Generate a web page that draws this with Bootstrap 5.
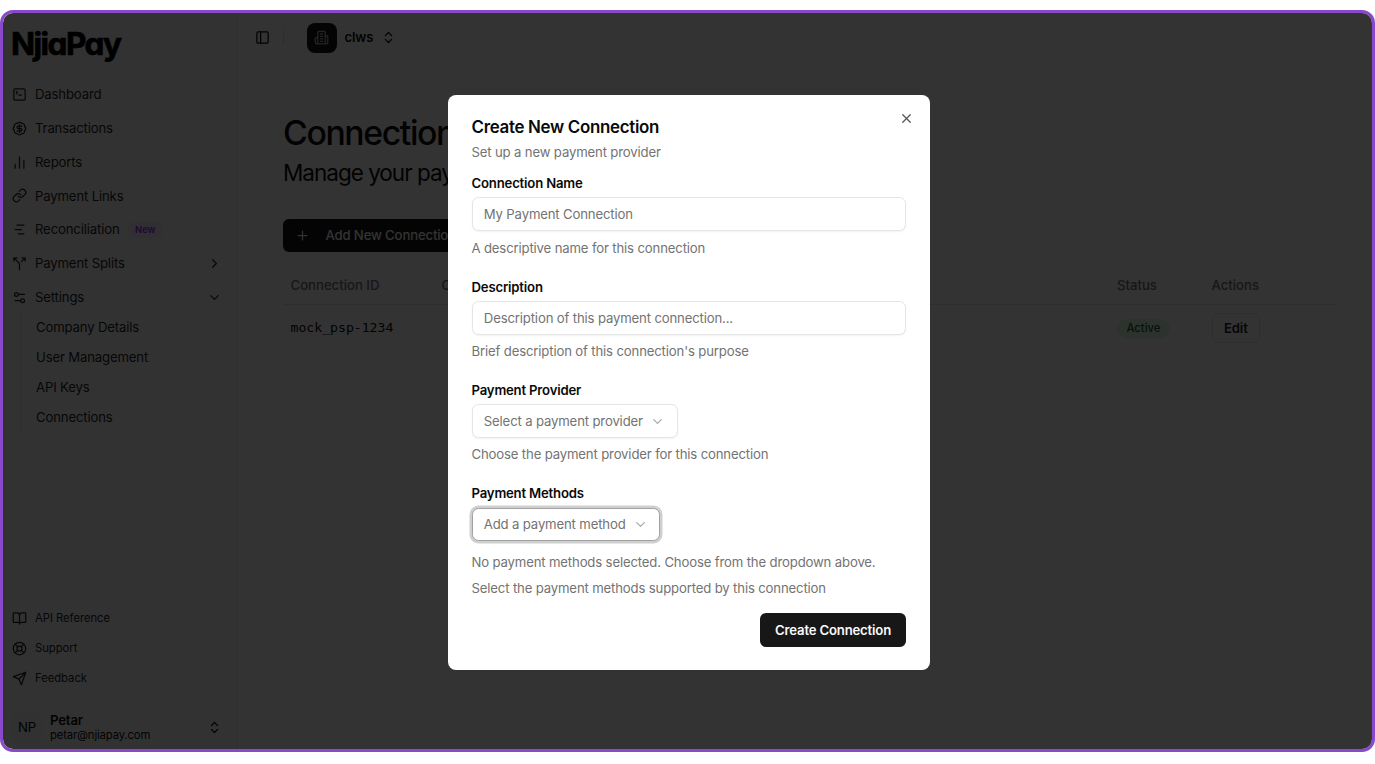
<!DOCTYPE html>
<html lang="en">
<head>
  <meta charset="UTF-8">
  <title>NjiaPay - Connections</title>
  <link href="https://cdn.jsdelivr.net/npm/bootstrap@5.3.3/dist/css/bootstrap.min.css" rel="stylesheet">
  <style>
    body { font-family: "Inter", sans-serif; font-size: 13.15px; line-height: 18.8px; letter-spacing: -.15px; color: #0a0a0a; padding-top: 10px; overflow: hidden; background: #fff; }
    button, input { letter-spacing: -.15px; }
    svg { fill: none; stroke: currentColor; stroke-width: 2; stroke-linecap: round; stroke-linejoin: round; flex-shrink: 0; width: 15px; height: 15px; }
    .app-frame { height: 741.5px; border: 3px solid #8a49cb; border-radius: 13px; background: #fff; overflow: hidden; }

    .sidebar { width: 235px; flex-shrink: 0; background: #fafafa; border-right: 1px solid #e5e5e5; padding: 0 8px 0 9px; }
    .brand { font-size: 31.5px; font-weight: 700; line-height: 38px; height: 64.5px; padding-top: 12px; letter-spacing: -1.5px; font-feature-settings: "cv11"; color: #000; margin-left: -1px; -webkit-text-stroke: .7px #000; }
    .side-link { height: 33.85px; gap: 8px; }
    .side-link .chev { margin-right: 7px; }
    .sub-menu { border-left: 1px solid #e5e5e5; margin-left: 7.5px; padding-left: 15.5px; margin-top: -2px; }
    .sub-menu a { height: 30.1px; }
    .sidebar a, .sidebar a:hover { color: #262626; text-decoration: none; }
    .tag-new { font-size: 9.4px; font-weight: 600; line-height: 16px; background: #f3e8ff; color: #9333ea; padding: 0 7.5px; letter-spacing: 0; }
    .side-foot { font-size: 11.3px; letter-spacing: -.05px; margin-bottom: 13px; }
    .side-foot a { height: 30.1px; gap: 8px; }
    .user-box { height: 42px; }
    .initials { width: 30px; height: 30px; background: #f5f5f5; border-radius: 7px; }
    .user-name { line-height: 15px; font-weight: 600; }
    .user-mail { font-size: 11.3px; line-height: 14px; }

    .topbar { height: 49px; padding-left: 17px; }
    .topbar .vr { margin-left: 13px; height: 15px; opacity: .12; }
    .org-icon { width: 30px; height: 30px; margin-left: 22.5px; background: #171717; color: #fafafa; border-radius: 8px; }
    .org-icon svg { opacity: .7; }
    .page-body { padding: 51.5px 36px 0 45px; }
    .page-title { font-size: 33.8px; font-weight: 500; line-height: 38px; letter-spacing: -1.4px; margin-bottom: 6.5px; }
    .page-sub { font-size: 22.5px; line-height: 30px; letter-spacing: -1px; margin-bottom: 30.5px; }
    .btn-dark-solid { background: #171717; color: #fafafa; height: 33.8px; border-radius: 6px; font-size: 13.15px; font-weight: 500; padding: 0 15px; line-height: 1; }
    .btn-add { padding-left: 10.5px; }
    .btn-create { font-weight: 600; letter-spacing: -.18px; padding: 0 14px; }
    .conn-table { table-layout: fixed; margin-top: 15px; }
    .conn-table th { font-weight: 500; color: #737373; padding: 0 7.5px; height: 37.6px; vertical-align: middle; border-color: #e5e5e5; letter-spacing: 0; }
    .conn-table td { padding: 0 7.5px; height: 46px; vertical-align: middle; border: 0; color: #0a0a0a; }
    .conn-table td.mono { font-family: "DejaVu Sans Mono", monospace; font-size: 13.15px; letter-spacing: 0; }
    .tag-active { font-size: 11.3px; font-weight: 500; letter-spacing: 0; line-height: 19px; background: #dcfce7; color: #166534; padding: 0 9.4px; }
    .btn-edit { border: 1px solid #e5e5e5; height: 30px; border-radius: 6px; font-size: 13.15px; font-weight: 600; padding: 0 11.5px; line-height: 1; }

    .backdrop-dim { background: rgba(0, 0, 0, .8); z-index: 5; }
    .dialog-box { left: 445px; top: 82px; width: 482px; height: 575px; background: #fff; border-radius: 8px; padding: 22.5px 24px 0 23.5px; z-index: 6; }
    .dialog-close { right: 16px; top: 16px; color: #555; line-height: 0; }
    .dialog-title { font-size: 16.9px; font-weight: 600; line-height: 19px; letter-spacing: -.3px; margin-bottom: 6px; }
    .hint { color: #737373; }
    .form-stack { gap: 21.2px; margin-top: 14px; }
    .field { display: flex; flex-direction: column; align-items: flex-start; gap: 7.5px; }
    .field label { font-weight: 600; line-height: 16.1px; letter-spacing: -.18px; margin-bottom: -1.5px; }
    .field .form-control { height: 33.8px; font-size: 13.15px; border: 1px solid #e5e5e5; border-radius: 6.5px; padding: 0 11.3px; box-shadow: 0 1px 2px rgba(0, 0, 0, .05); }
    .field .form-control::placeholder { color: #737373; }
    .picker { height: 33.8px; border: 1px solid #e5e5e5; border-radius: 6.5px; padding: 0 11.3px; gap: 7.5px; color: #737373; background: #fff; box-shadow: 0 1px 2px rgba(0, 0, 0, .05); }
    .picker svg { opacity: .6; }
    .picker.focused { border-color: #a1a1a1; box-shadow: 0 0 0 2.5px #cfcfcf; }
    .dialog-foot { margin-top: 15.5px; }
  </style>
</head>
<body>

  <svg class="d-none">
    <symbol id="terminal" viewBox="0 0 24 24"><path d="m7 11 2-2-2-2M11 13h4"/><rect x="3" y="3" width="18" height="18" rx="2"/></symbol>
    <symbol id="dollar" viewBox="0 0 24 24"><path d="M3.85 8.62a4 4 0 0 1 4.78-4.77 4 4 0 0 1 6.74 0 4 4 0 0 1 4.78 4.78 4 4 0 0 1 0 6.74 4 4 0 0 1-4.77 4.78 4 4 0 0 1-6.75 0 4 4 0 0 1-4.78-4.77 4 4 0 0 1 0-6.76Z"/><path d="M16 8h-6a2 2 0 1 0 0 4h4a2 2 0 1 1 0 4H8M12 18V6"/></symbol>
    <symbol id="bars" viewBox="0 0 24 24"><path d="M5 21v-6M12 21V3M19 21V9"/></symbol>
    <symbol id="chain" viewBox="0 0 24 24"><path d="M10 13a5 5 0 0 0 7.54.54l3-3a5 5 0 0 0-7.07-7.07l-1.72 1.71"/><path d="M14 11a5 5 0 0 0-7.54-.54l-3 3a5 5 0 0 0 7.07 7.07l1.71-1.71"/></symbol>
    <symbol id="gantt" viewBox="0 0 24 24"><path d="M8 5h11M5 12h10M10 19h9"/></symbol>
    <symbol id="split" viewBox="0 0 24 24"><path d="M16 3h5v5M8 3H3v5M12 22v-8.3a4 4 0 0 0-1.17-2.87L3 3M15 9l6-6"/></symbol>
    <symbol id="sliders" viewBox="0 0 24 24"><path d="M20 7h-9M14 17H5"/><circle cx="17" cy="17" r="3"/><circle cx="7" cy="7" r="3"/></symbol>
    <symbol id="book" viewBox="0 0 24 24"><path d="M12 7v14M3 18a1 1 0 0 1-1-1V4a1 1 0 0 1 1-1h5a4 4 0 0 1 4 4 4 4 0 0 1 4-4h5a1 1 0 0 1 1 1v13a1 1 0 0 1-1 1h-6a3 3 0 0 0-3 3 3 3 0 0 0-3-3z"/></symbol>
    <symbol id="buoy" viewBox="0 0 24 24"><circle cx="12" cy="12" r="10"/><circle cx="12" cy="12" r="4"/><path d="m4.93 4.93 4.24 4.24M14.83 9.17l4.24-4.24M14.83 14.83l4.24 4.24M9.17 14.83l-4.24 4.24"/></symbol>
    <symbol id="send" viewBox="0 0 24 24"><path d="M22 2 15 22l-4-9-9-4zM22 2 11 13"/></symbol>
    <symbol id="updown" viewBox="0 0 24 24"><path d="m7 15 5 5 5-5M7 9l5-5 5 5"/></symbol>
    <symbol id="right" viewBox="0 0 24 24"><path d="m9 18 6-6-6-6"/></symbol>
    <symbol id="down" viewBox="0 0 24 24"><path d="m6 9 6 6 6-6"/></symbol>
    <symbol id="panel" viewBox="0 0 24 24"><rect x="3" y="3" width="18" height="18" rx="2"/><path d="M9 3v18"/></symbol>
    <symbol id="building" viewBox="0 0 24 24"><path d="M6 22V4a2 2 0 0 1 2-2h8a2 2 0 0 1 2 2v18ZM6 12H4a2 2 0 0 0-2 2v6a2 2 0 0 0 2 2h2M18 9h2a2 2 0 0 1 2 2v9a2 2 0 0 1-2 2h-2M10 6h4M10 10h4M10 14h4M10 18h4"/></symbol>
    <symbol id="plus" viewBox="0 0 24 24"><path d="M5 12h14M12 5v14"/></symbol>
    <symbol id="cross" viewBox="0 0 24 24"><path d="M18 6 6 18M6 6l12 12"/></symbol>
  </svg>

  <div class="app-frame position-relative d-flex">
    <aside class="sidebar d-flex flex-column">
      <div class="brand">NjiaPay</div>
      <nav>
        <a href="#" class="side-link d-flex align-items-center"><svg><use href="#terminal"/></svg>Dashboard</a>
        <a href="#" class="side-link d-flex align-items-center"><svg><use href="#dollar"/></svg>Transactions</a>
        <a href="#" class="side-link d-flex align-items-center"><svg><use href="#bars"/></svg>Reports</a>
        <a href="#" class="side-link d-flex align-items-center"><svg><use href="#chain"/></svg>Payment Links</a>
        <a href="#" class="side-link d-flex align-items-center"><svg><use href="#gantt"/></svg>Reconciliation <span class="tag-new rounded-pill">New</span></a>
        <a href="#" class="side-link d-flex align-items-center"><svg><use href="#split"/></svg>Payment Splits <svg class="chev ms-auto"><use href="#right"/></svg></a>
        <a href="#" class="side-link d-flex align-items-center"><svg><use href="#sliders"/></svg>Settings <svg class="chev ms-auto"><use href="#down"/></svg></a>
        <div class="sub-menu">
          <a href="#" class="d-flex align-items-center">Company Details</a>
          <a href="#" class="d-flex align-items-center">User Management</a>
          <a href="#" class="d-flex align-items-center">API Keys</a>
          <a href="#" class="d-flex align-items-center">Connections</a>
        </div>
      </nav>
      <div class="side-foot mt-auto">
        <a href="#" class="d-flex align-items-center"><svg><use href="#book"/></svg>API Reference</a>
        <a href="#" class="d-flex align-items-center"><svg><use href="#buoy"/></svg>Support</a>
        <a href="#" class="d-flex align-items-center"><svg><use href="#send"/></svg>Feedback</a>
      </div>
      <div class="user-box side-link d-flex align-items-center">
        <div class="initials d-flex align-items-center justify-content-center">NP</div>
        <div>
          <div class="user-name">Petar</div>
          <div class="user-mail">petar@njiapay.com</div>
        </div>
        <svg class="chev ms-auto"><use href="#updown"/></svg>
      </div>
    </aside>

    <main class="flex-grow-1">
      <header class="topbar d-flex align-items-center">
        <svg><use href="#panel"/></svg>
        <div class="vr align-self-center"></div>
        <div class="org-icon d-flex align-items-center justify-content-center"><svg><use href="#building"/></svg></div>
        <span class="fw-semibold ms-2">clws</span>
        <svg class="ms-2"><use href="#updown"/></svg>
      </header>

      <div class="page-body">
        <h1 class="page-title">Connections</h1>
        <p class="page-sub">Manage your payment connections</p>
        <button class="btn btn-dark-solid btn-add d-flex align-items-center"><svg class="me-3"><use href="#plus"/></svg>Add New Connection</button>
        <table class="conn-table table mb-0">
          <colgroup><col width="151"><col><col width="94.5"><col width="132"></colgroup>
          <thead>
            <tr><th>Connection ID</th><th>Connection Name</th><th>Status</th><th>Actions</th></tr>
          </thead>
          <tbody>
            <tr>
              <td class="mono">mock_psp-1234</td>
              <td></td>
              <td><span class="tag-active rounded-pill d-inline-block">Active</span></td>
              <td><button class="btn btn-edit">Edit</button></td>
            </tr>
          </tbody>
        </table>
      </div>
    </main>

    <div class="backdrop-dim position-absolute top-0 start-0 w-100 h-100"></div>

    <div class="dialog-box position-absolute" role="dialog">
      <div class="dialog-close position-absolute"><svg><use href="#cross"/></svg></div>
      <h2 class="dialog-title">Create New Connection</h2>
      <div class="hint">Set up a new payment provider</div>
      <form class="form-stack d-flex flex-column">
        <div class="field">
          <label>Connection Name</label>
          <input class="form-control" type="text" placeholder="My Payment Connection">
          <div class="hint">A descriptive name for this connection</div>
        </div>
        <div class="field">
          <label>Description</label>
          <input class="form-control" type="text" placeholder="Description of this payment connection...">
          <div class="hint">Brief description of this connection's purpose</div>
        </div>
        <div class="field">
          <label>Payment Provider</label>
          <button type="button" class="picker d-flex align-items-center">Select a payment provider <svg><use href="#down"/></svg></button>
          <div class="hint">Choose the payment provider for this connection</div>
        </div>
        <div class="field">
          <label>Payment Methods</label>
          <button type="button" class="picker focused d-flex align-items-center">Add a payment method <svg><use href="#down"/></svg></button>
          <div class="hint mt-1">No payment methods selected. Choose from the dropdown above.</div>
          <div class="hint">Select the payment methods supported by this connection</div>
        </div>
      </form>
      <div class="dialog-foot d-flex justify-content-end">
        <button class="btn btn-dark-solid btn-create">Create Connection</button>
      </div>
    </div>
  </div>

  <script src="https://cdn.jsdelivr.net/npm/bootstrap@5.3.3/dist/js/bootstrap.bundle.min.js"></script>
</body>
</html>
